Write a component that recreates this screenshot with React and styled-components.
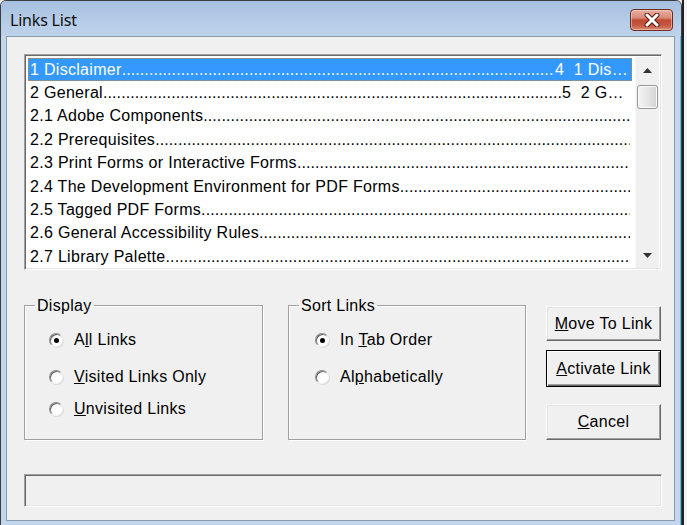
import React from "react";
import styled, { createGlobalStyle, css } from "styled-components";

const GlobalStyle = createGlobalStyle`
  html, body {
    margin: 0;
    padding: 0;
    background: #e9e9e9;
  }
  * { box-sizing: border-box; }
`;

const links = [
  { title: "1 Disclaimer", tail: "4\u00a0\u00a01 Disclaimer", tailWidth: 75, selected: true },
  { title: "2 General", tail: "5\u00a0\u00a02 General", tailWidth: 68 },
  { title: "2.1 Adobe Components" },
  { title: "2.2 Prerequisites" },
  { title: "2.3 Print Forms or Interactive Forms" },
  { title: "2.4 The Development Environment for PDF Forms" },
  { title: "2.5 Tagged PDF Forms" },
  { title: "2.6 General Accessibility Rules" },
  { title: "2.7 Library Palette" },
];

const DOTS = ".".repeat(220);

const LinksList = () => {
  return (
    <Desk>
      <GlobalStyle />
      <Window>
        <TitleBar>
          <Title>Links List</Title>
          <CloseButton aria-label="Close">
            <svg width="18" height="14" viewBox="0 0 18 14">
              <path d="M4 2 L14 12 M14 2 L4 12" stroke="#5a1d14" strokeWidth="5" strokeLinecap="round" />
              <path d="M4 2 L14 12 M14 2 L4 12" stroke="#fff" strokeWidth="3" strokeLinecap="round" />
            </svg>
          </CloseButton>
        </TitleBar>

        <Client>
          <ListBox>
            <Rows>
              {links.map((l) => (
                <Row key={l.title} $selected={l.selected}>
                  <span>{l.title}</span>
                  <Leader>{DOTS}</Leader>
                  {l.tail && <Tail style={{ width: l.tailWidth }}>{l.tail}</Tail>}
                </Row>
              ))}
            </Rows>
            <ScrollBar>
              <ArrowBox>
                <svg width="9" height="5" viewBox="0 0 9 5"><path d="M0 5 L4.5 0 L9 5 Z" fill="#333" /></svg>
              </ArrowBox>
              <Thumb />
              <Track />
              <ArrowBox>
                <svg width="9" height="5" viewBox="0 0 9 5"><path d="M0 0 L9 0 L4.5 5 Z" fill="#333" /></svg>
              </ArrowBox>
            </ScrollBar>
          </ListBox>

          <Controls>
            <Group $width={239}>
              <Legend>Display</Legend>
              <RadioList $inset={24}>
                <RadioRow>
                  <Radio $checked />
                  <span>A<u>l</u>l Links</span>
                </RadioRow>
                <RadioRow $top={15}>
                  <Radio />
                  <span><u>V</u>isited Links Only</span>
                </RadioRow>
                <RadioRow $top={10}>
                  <Radio />
                  <span><u>U</u>nvisited Links</span>
                </RadioRow>
              </RadioList>
            </Group>

            <Group $width={238}>
              <Legend>Sort Links</Legend>
              <RadioList $inset={26}>
                <RadioRow>
                  <Radio $checked />
                  <span>In <u>T</u>ab Order</span>
                </RadioRow>
                <RadioRow $top={15}>
                  <Radio />
                  <span>Al<u>p</u>habetically</span>
                </RadioRow>
              </RadioList>
            </Group>

            <ButtonColumn>
              <Button $top={9} $h={35}><u>M</u>ove To Link</Button>
              <Button $top={9} $h={37} $default><u>A</u>ctivate Link</Button>
              <Button $top={17} $h={36}><u>C</u>ancel</Button>
            </ButtonColumn>
          </Controls>

          <StatusBox />
        </Client>
      </Window>
      <Edge />
    </Desk>
  );
};

const Desk = styled.div`
  display: flex;
  width: 687px;
  height: 525px;
  overflow: hidden;
`;

const Window = styled.div`
  width: 682px;
  height: 527px;
  flex: none;
  display: flex;
  flex-direction: column;
  background: #c2d7ee;
  border: 1px solid #3b3f45;
  border-radius: 6px 6px 0 0;
  padding: 0 6px 5px 5px;
  box-shadow: inset -1px 0 0 #4fc3ee;
`;

const Edge = styled.div`
  flex: 1;
  background: #f4f4f4;
  border-left: 2px solid #222;
`;

const TitleBar = styled.div`
  height: 35px;
  flex: none;
  margin: 0 -6px 0 -5px;
  padding: 0 8px 0 9px;
  display: flex;
  align-items: center;
  justify-content: space-between;
  background: linear-gradient(#a6c0df, #b6cde8 60%, #bdd3ec);
  border-radius: 5px 5px 0 0;
`;

const Title = styled.div`
  font-family: "Noto Sans", "Open Sans", sans-serif;
  font-size: 16px;
  color: #111;
  letter-spacing: -0.2px;
  margin-top: 2px;
`;

const CloseButton = styled.div`
  width: 43px;
  height: 22px;
  margin-top: 2px;
  display: flex;
  align-items: center;
  justify-content: center;
  border: 1px solid #6b2a22;
  border-radius: 4px;
  background: linear-gradient(#eab0a2 0%, #d88876 40%, #c24a34 50%, #c45640 75%, #dc8a72 100%);
  box-shadow: inset 0 0 0 1px rgba(255, 220, 210, 0.5);
`;

const Client = styled.div`
  flex: 1;
  display: flex;
  flex-direction: column;
  background: #f0f0f0;
  border: 1px solid #8c9bab;
  padding: 17px 12px 0 17px;
`;

const ListBox = styled.div`
  height: 216px;
  flex: none;
  display: flex;
  background: #fff;
  border: 1px solid;
  border-color: #a0a0a0 #ffffff #ffffff #a0a0a0;
  box-shadow: inset 1px 1px 0 #696969, inset -1px -1px 0 #e3e3e3;
  padding: 3px 2px 2px 3px;
`;

const Rows = styled.div`
  flex: 1;
  min-width: 0;
  display: flex;
  flex-direction: column;
`;

const Row = styled.div`
  height: 23.4px;
  flex: none;
  display: flex;
  align-items: center;
  padding: 0 2px;
  white-space: nowrap;
  font-family: "Liberation Sans", Arial, sans-serif;
  font-size: 16px;
  letter-spacing: 0.3px;
  color: #000;
  ${(p) =>
    p.$selected &&
    css`
      background: #3399ff;
      color: #fff;
      outline: 1px dotted #c98a3c;
      outline-offset: -1px;
    `}
`;

const Leader = styled.span`
  flex: 1 1 0;
  min-width: 0;
  overflow: hidden;
  letter-spacing: 0.1px;
`;

const Tail = styled.span`
  flex: none;
  overflow: hidden;
  text-overflow: ellipsis;
`;

const ScrollBar = styled.div`
  width: 24px;
  flex: none;
  margin-left: 3px;
  margin-top: -1px;
  margin-bottom: -1px;
  display: flex;
  flex-direction: column;
  background: #f0f0f0;
  border-left: 1px solid #f8f8f8;
`;

const ArrowBox = styled.div`
  height: 26px;
  display: flex;
  align-items: center;
  justify-content: center;
`;

const Thumb = styled.div`
  height: 24px;
  margin: 2px 1px 0 1px;
  border: 1px solid #979797;
  border-radius: 3px;
  background: linear-gradient(90deg, #f4f4f4, #e6e6e6 50%, #d2d2d2);
  box-shadow: inset 0 0 0 1px #fbfbfb;
`;

const Track = styled.div`
  flex: 1;
`;

const Controls = styled.div`
  display: flex;
  gap: 25px;
  margin-top: 27px;
  height: 143px;
`;

const Group = styled.fieldset`
  width: ${(p) => p.$width}px;
  flex: none;
  margin: 0;
  padding: 0;
  min-width: 0;
  border: 1px solid #a0a0a0;
  box-shadow: inset 1px 1px 0 #fff, 1px 1px 0 #fff;
  font-family: "Liberation Sans", Arial, sans-serif;
  font-size: 16px;
  letter-spacing: 0.3px;
  color: #000;
`;

const Legend = styled.legend`
  margin-left: 10px;
  padding: 0 2px;
  line-height: 17px;
`;

const RadioList = styled.div`
  display: flex;
  flex-direction: column;
  padding: 15px 0 0 ${(p) => p.$inset}px;
`;

const RadioRow = styled.label`
  height: 22px;
  display: flex;
  align-items: center;
  gap: 11px;
  margin-top: ${(p) => p.$top || 0}px;
`;

const Radio = styled.span`
  width: 14px;
  height: 14px;
  flex: none;
  border-radius: 50%;
  background: #fff;
  border: 1px solid;
  border-color: #8a8a8a #f4f4f4 #f4f4f4 #8a8a8a;
  box-shadow: inset 1px 1px 0 #5f5f5f, 1px 1px 0 #dcdcdc;
  display: flex;
  align-items: center;
  justify-content: center;
  &::after {
    content: "";
    width: 5px;
    height: 5px;
    border-radius: 50%;
    background: ${(p) => (p.$checked ? "#000" : "transparent")};
  }
`;

const ButtonColumn = styled.div`
  width: 115px;
  flex: none;
  margin-left: -5px;
  display: flex;
  flex-direction: column;
`;

const Button = styled.div`
  height: ${(p) => p.$h}px;
  margin-top: ${(p) => p.$top}px;
  display: flex;
  align-items: center;
  justify-content: center;
  background: #f0f0f0;
  font-family: "Liberation Sans", Arial, sans-serif;
  font-size: 16px;
  letter-spacing: 0.3px;
  color: #000;
  border: 1px solid;
  border-color: #ffffff #696969 #696969 #ffffff;
  box-shadow: inset -1px -1px 0 #a0a0a0, inset 1px 1px 0 #e3e3e3;
  ${(p) =>
    p.$default &&
    css`
      border-color: #000;
      box-shadow: inset 1px 1px 0 #fff, inset -1px -1px 0 #696969, inset -2px -2px 0 #a0a0a0;
    `}
`;

const StatusBox = styled.div`
  height: 33px;
  flex: none;
  margin-top: 34px;
  width: 638px;
  border: 1px solid;
  border-color: #a0a0a0 #ffffff #ffffff #a0a0a0;
  box-shadow: inset 1px 1px 0 #696969, inset -1px -1px 0 #e3e3e3;
`;

export default LinksList;
